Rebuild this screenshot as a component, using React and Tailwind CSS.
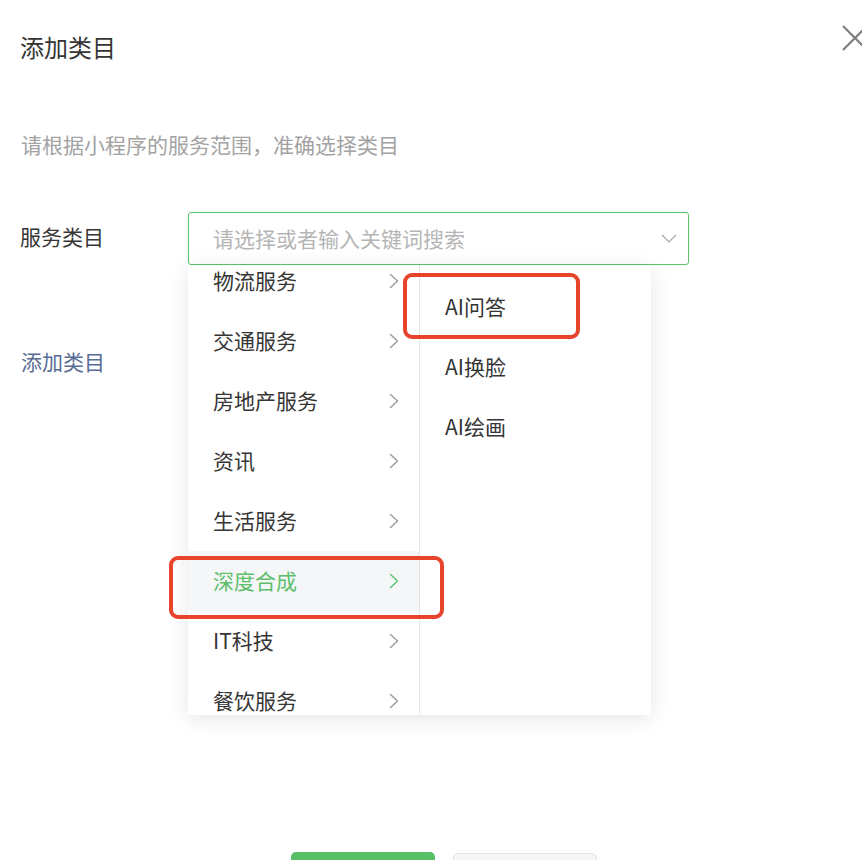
import React from "react";

const FONT = { fontFamily: '"Noto Sans CJK SC", "Noto Sans", sans-serif' };

function ChevronRight({ color = "#9a9a9a" }) {
  return (
    <svg width="10" height="16" viewBox="0 0 10 16" fill="none">
      <polyline points="1.5,1.5 8.5,8 1.5,14.5" stroke={color} strokeWidth="1.4" strokeLinecap="round" strokeLinejoin="round" />
    </svg>
  );
}

const leftItems = ["物流服务", "交通服务", "房地产服务", "资讯", "生活服务", "深度合成", "IT科技", "餐饮服务"];
const rightItems = ["AI问答", "AI换脸", "AI绘画"];

export default function App() {
  return (
    <div className="relative w-[862px] h-[860px] overflow-hidden bg-white flex flex-col" style={FONT}>
      <div className="pl-[20px] pt-[34px] text-[24px] leading-[26px] text-[#353535]">添加类目</div>

      <svg className="absolute left-[842px] top-[25px]" width="26" height="26" viewBox="0 0 26 26">
        <line x1="1" y1="1" x2="25" y2="25" stroke="#7b7b7b" strokeWidth="2" />
        <line x1="25" y1="1" x2="1" y2="25" stroke="#7b7b7b" strokeWidth="2" />
      </svg>

      <div className="pl-[21px] mt-[72px] text-[21px] leading-[24px] text-[#a3a3a3]">请根据小程序的服务范围，准确选择类目</div>

      <div className="mt-[56px] flex items-center">
        <div className="w-[188px] pl-[20px] pb-[6px] text-[21px] leading-[24px] text-[#353535]">服务类目</div>
        <div className="w-[501px] h-[53px] border border-[#5cc36a] rounded-[3px] flex items-center justify-between pl-[24px] pr-[11px]">
          <span className="pb-[2px] text-[21px] leading-[24px] text-[#b5b5b5]">请选择或者输入关键词搜索</span>
          <svg width="16" height="9" viewBox="0 0 16 9" fill="none">
            <polyline points="1,1 8,8 15,1" stroke="#a8a8a8" strokeWidth="1.2" />
          </svg>
        </div>
      </div>

      <div className="pl-[21px] mt-[84px] text-[21px] leading-[24px] text-[#576b95]">添加类目</div>

      <div className="mt-[479px] flex pl-[291px] gap-[18px]">
        <div className="w-[144px] h-[40px] rounded-[5px] bg-[#56bf68]" />
        <div className="mt-[1px] w-[144px] h-[40px] rounded-[5px] bg-[#f4f5f7] border border-[#e3e3e5]" />
      </div>

      {/* dropdown popover */}
      <div className="absolute left-[188px] top-[265px] w-[463px] h-[450px] bg-white shadow-[0_4px_20px_rgba(0,0,0,0.10)] flex">
        <div className="w-[231px] h-full overflow-hidden">
          <div className="-mt-[14px]">
            {leftItems.map((t) => {
              const active = t === "深度合成";
              return (
                <div
                  key={t}
                  className={
                    active
                      ? "h-[60px] flex items-center justify-between pl-[25px] pr-[20px] bg-[#f5f6f8]"
                      : "h-[60px] flex items-center justify-between pl-[25px] pr-[20px]"
                  }
                >
                  <span className={active ? "pb-[2px] text-[21px] leading-[24px] text-[#5dbf6c]" : "pb-[2px] text-[21px] leading-[24px] text-[#353535]"}>{t}</span>
                  <ChevronRight color={active ? "#5dbf6c" : "#9a9a9a"} />
                </div>
              );
            })}
          </div>
        </div>
        <div className="w-px h-full bg-[#e6e6e6]" />
        <div className="w-[231px] pt-[12px]">
          {rightItems.map((t) => (
            <div key={t} className="h-[60px] flex items-center pl-[25px] pb-[2px] text-[21px] leading-[24px] text-[#353535]">{t}</div>
          ))}
        </div>
      </div>

      {/* red annotation boxes */}
      <div className="absolute left-[403px] top-[273px] w-[177px] h-[66px] border-[4px] border-[#e8442c] rounded-[9px]" />
      <div className="absolute left-[169px] top-[556px] w-[275px] h-[63px] border-[4px] border-[#e8442c] rounded-[9px]" />
    </div>
  );
}
